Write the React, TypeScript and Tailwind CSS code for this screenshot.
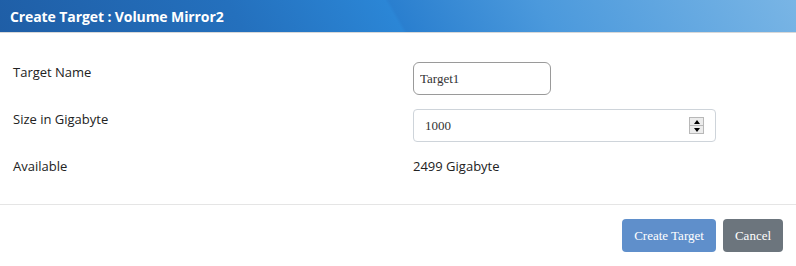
import React, { useState } from 'react';

const serif = "font-['Liberation_Serif','Times_New_Roman',serif]";

export default function App() {
  const [name, setName] = useState('Target1');
  const [size, setSize] = useState('1000');

  return (
    <div className="w-[796px] h-[266px] bg-white font-['Open_Sans','Noto_Sans',sans-serif] text-[#222]">
      {/* Title bar */}
      <div className="h-[33px] border-b border-[#d8d8d8] bg-[linear-gradient(60deg,#1f5ea6_0%,#2470bd_30%,#2b86d6_49.5%,#2a7fcf_50%,#4b99dc_68%,#79b5e5_100%)] flex items-center px-[10px]">
        <h1 className="text-white font-bold text-[14px] tracking-[-0.1px]">Create Target : Volume Mirror2</h1>
      </div>

      {/* Form body */}
      <div className="pl-[13px] pt-[29px] h-[172px] border-b border-[#e5e5e5]">
        <div className="flex items-start h-[33px]">
          <label className="w-[400px] text-[13px] leading-[20px]">Target Name</label>
          <input
            value={name}
            onChange={e => setName(e.target.value)}
            className={`w-[138px] h-[33px] border border-[#9a9a9a] rounded-[6px] px-[6px] text-[13px] text-[#333] outline-none ${serif}`}
          />
        </div>
        <div className="flex items-start h-[33px] mt-[14px]">
          <label className="w-[400px] text-[13px] leading-[20px]">Size in Gigabyte</label>
          <div className="relative w-[303px] h-[33px] border border-[#ced4da] rounded-[4px] flex items-center">
            <input
              value={size}
              onChange={e => setSize(e.target.value)}
              className={`flex-1 h-full pl-[11px] text-[13px] text-[#333] outline-none bg-transparent ${serif}`}
            />
            <div className="mr-[11px] w-[15px] h-[17px] border border-[#b8b8b8] bg-[#ececec] flex flex-col">
              <div className="flex-1 flex items-center justify-center border-b border-[#b8b8b8]">
                <div className="w-0 h-0 border-l-[3px] border-r-[3px] border-b-[4px] border-l-transparent border-r-transparent border-b-black" />
              </div>
              <div className="flex-1 flex items-center justify-center">
                <div className="w-0 h-0 border-l-[3px] border-r-[3px] border-t-[4px] border-l-transparent border-r-transparent border-t-black" />
              </div>
            </div>
          </div>
        </div>
        <div className="flex items-start h-[33px] mt-[14px]">
          <span className="w-[400px] text-[13px] leading-[20px]">Available</span>
          <span className="text-[13px] leading-[20px]">2499 Gigabyte</span>
        </div>
      </div>

      {/* Footer */}
      <div className="flex justify-end gap-[7px] pr-[13px] pt-[14px]">
        <button className={`h-[33px] w-[94px] rounded-[4px] bg-[#5f8fcb] text-white text-[13px] ${serif}`}>
          Create Target
        </button>
        <button className={`h-[33px] w-[60px] rounded-[4px] bg-[#6c757d] text-white text-[13px] ${serif}`}>
          Cancel
        </button>
      </div>
    </div>
  );
}
